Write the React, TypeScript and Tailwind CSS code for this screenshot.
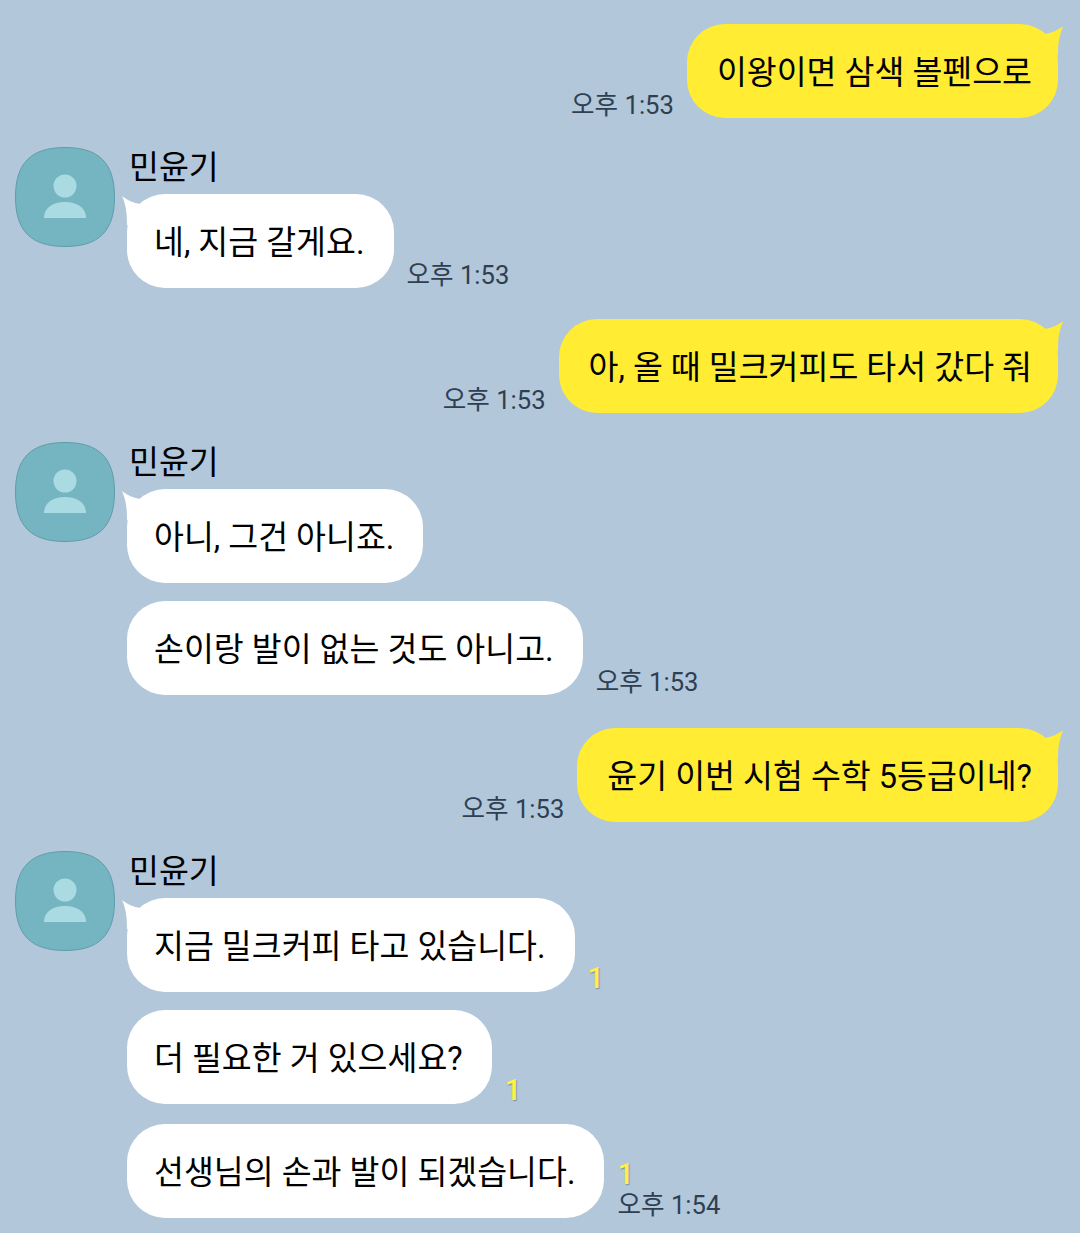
const FONT = "font-['Roboto','Noto_Sans_CJK_KR',sans-serif]";

function Time({ text, read }: { text?: string; read?: boolean }) {
  return (
    <div className="flex shrink-0 flex-col items-start gap-[6px] pb-[1px]">
      {read && (
        <span className="text-[29px] font-medium leading-[25px] text-[#fff04a] [text-shadow:1px_1px_1px_rgba(70,90,110,0.5)]">1</span>
      )}
      {text && <span className="whitespace-nowrap text-[25.6px] leading-[24px] text-[#2f3f52]">{text}</span>}
    </div>
  );
}

function Sent({ text, time, className }: { text: string; time: string; className: string }) {
  return (
    <div className={`flex items-end justify-end gap-[13px] pr-[22px] ${className}`}>
      <Time text={time} />
      <div className="relative flex h-[94px] items-center rounded-[38px] bg-[#ffec33] pl-[30px] pr-[26px] text-[32.5px] text-black">
        <span className="relative top-[2px] whitespace-nowrap">{text}</span>
        <svg className="absolute right-[-6px] top-[1px]" width="26" height="32" viewBox="0 0 26 32">
          <path d="M25.5 1 C20 5 14 8 6 9 L6 30 L20 30 C20 18 21 10 25.5 1 Z" fill="#ffec33" />
        </svg>
      </div>
    </div>
  );
}

function Received({ text, time, read, tail, className }: { text: string; time?: string; read?: boolean; tail?: boolean; className?: string }) {
  return (
    <div className={`flex items-end gap-[13px] ${className ?? ""}`}>
      <div className="relative flex h-[94px] items-center rounded-[38px] bg-white pl-[27px] pr-[29px] text-[32.5px] text-black">
        <span className="relative top-[2px] whitespace-nowrap">{text}</span>
        {tail && (
          <svg className="absolute left-[-5px] top-[1px]" width="26" height="32" viewBox="0 0 26 32">
            <path d="M0 1 C5 5 11 8 19 9 L19 30 L5 30 C5 18 4 10 0 1 Z" fill="#ffffff" />
          </svg>
        )}
      </div>
      <Time text={time} read={read} />
    </div>
  );
}

function Avatar() {
  return (
    <svg className="shrink-0" width="100" height="100" viewBox="0 0 100 100">
      <path
        d="M50 .5 C84 .5 99.5 16 99.5 50 C99.5 84 84 99.5 50 99.5 C16 99.5 .5 84 .5 50 C.5 16 16 .5 50 .5 Z"
        fill="#75b4c1"
        stroke="#5f9dab"
        strokeWidth="1"
      />
      <circle cx="50" cy="39" r="11.5" fill="#aadbe3" />
      <path d="M29 71 C29 60 39 55 50 55 C61 55 71 60 71 71 Z" fill="#aadbe3" />
    </svg>
  );
}

function Group({ children, className }: { children: React.ReactNode; className: string }) {
  return (
    <div className={`flex pl-[15px] ${className}`}>
      <Avatar />
      <div className="ml-[12px] flex flex-col">
        <div className="h-[47px] pl-[2px] pt-[1px] text-[32.5px] leading-[40px] text-black">민윤기</div>
        {children}
      </div>
    </div>
  );
}

export default function App() {
  return (
    <div className={`h-[1233px] w-[1080px] overflow-hidden bg-[#b2c7da] pt-[24px] ${FONT}`}>
      <Sent text="이왕이면 삼색 볼펜으로" time="오후 1:53" className="" />
      <Group className="mt-[29px]">
        <Received text="네, 지금 갈게요." time="오후 1:53" tail />
      </Group>
      <Sent text="아, 올 때 밀크커피도 타서 갔다 줘" time="오후 1:53" className="mt-[31px]" />
      <Group className="mt-[29px]">
        <Received text="아니, 그건 아니죠." tail />
        <Received text="손이랑 발이 없는 것도 아니고." time="오후 1:53" className="mt-[18px]" />
      </Group>
      <Sent text="윤기 이번 시험 수학 5등급이네?" time="오후 1:53" className="mt-[33px]" />
      <Group className="mt-[29px]">
        <Received text="지금 밀크커피 타고 있습니다." read tail />
        <Received text="더 필요한 거 있으세요?" read className="mt-[18px]" />
        <Received text="선생님의 손과 발이 되겠습니다." time="오후 1:54" read className="mt-[20px]" />
      </Group>
    </div>
  );
}
